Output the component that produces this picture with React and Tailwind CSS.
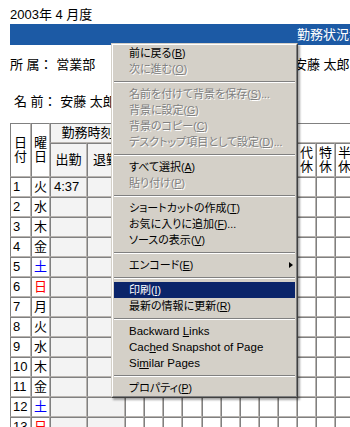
import React from "react";

const days = ["火", "水", "木", "金", "土", "日", "月", "火", "水", "木", "金", "土", "日"];
// columns under the menu carry no visible label in the picture
const subLabels = ["", "", "", "", "", "", "", "", "", "代休", "特休", "半休"];

const cell =
  "border border-t-[#808080] border-l-[#808080] border-r-[#b8b4b0] border-b-[#b8b4b0] p-0 font-normal";

const menu = [
  { t: "前に戻る", k: "B" },
  { t: "次に進む", k: "O", off: true },
  "sep",
  { t: "名前を付けて背景を保存", k: "S", dots: true, off: true },
  { t: "背景に設定", k: "G", off: true },
  { t: "背景のコピー", k: "C", off: true },
  { t: "デスクトップ項目として設定", k: "D", dots: true, off: true },
  "sep",
  { t: "すべて選択", k: "A" },
  { t: "貼り付け", k: "P", off: true },
  "sep",
  { t: "ショートカットの作成", k: "T" },
  { t: "お気に入りに追加", k: "F", dots: true },
  { t: "ソースの表示", k: "V" },
  "sep",
  { t: "エンコード", k: "E", sub: true },
  "sep",
  { t: "印刷", k: "I", active: true },
  { t: "最新の情報に更新", k: "R" },
  "sep",
  { en: ["Backward ", "L", "inks"] },
  { en: ["Cac", "h", "ed Snapshot of Page"] },
  { en: ["Si", "m", "ilar Pages"] },
  "sep",
  { t: "プロパティ", k: "P" },
];

function MenuItem({ item }) {
  if (item === "sep") {
    return (
      <div className="h-[9px] flex flex-col justify-center">
        <div className="h-px bg-[#808080]" />
        <div className="h-px bg-white" />
      </div>
    );
  }
  const tone = item.active
    ? "bg-[#0a246a] text-white"
    : item.off
    ? "text-[#808080] [text-shadow:1px_1px_0_#ffffff]"
    : "text-black";
  return (
    <div className={`relative h-[16px] leading-[16px] pl-[15px] whitespace-nowrap ${tone}`}>
      {item.en ? (
        <span className="text-[11.5px]">
          {item.en[0]}
          <u>{item.en[1]}</u>
          {item.en[2]}
        </span>
      ) : (
        <>
          {item.t}
          <span className="text-[10.5px]">
            (<u>{item.k}</u>){item.dots ? "..." : ""}
          </span>
        </>
      )}
      {item.sub && (
        <span className="absolute right-[2px] top-[5px] w-0 h-0 border-y-[3.5px] border-y-transparent border-l-[4px] border-l-black" />
      )}
    </div>
  );
}

export default function App() {
  return (
    <div className="relative w-[350px] h-[427px] overflow-hidden bg-white text-black font-['Liberation_Sans','Noto_Sans_CJK_JP',sans-serif]">
      <div className="ml-[10px] pt-[7px] text-[13px] leading-[15px]">2003年 4 月度</div>

      <div className="mt-[2px] ml-[10px] h-[21px] bg-[#1c5aa5] pl-[287px] flex items-center whitespace-nowrap overflow-hidden text-white text-[13px]">
        勤務状況報告書
      </div>

      <div className="mt-[12px] ml-[10px] flex text-[13px] leading-[15px] whitespace-nowrap">
        <div className="w-[284px]">所 属：&nbsp;営業部</div>
        <div>安藤 太郎</div>
      </div>

      <div className="mt-[22px] ml-[14px] text-[13px] leading-[15px] whitespace-nowrap">名 前：&nbsp;安藤 太郎</div>

      <table className="mt-[14px] ml-[10px] w-[344px] table-fixed border-separate border-spacing-0 text-[13px] leading-[14px]">
        <colgroup>
          <col className="w-[21px]" />
          <col className="w-[19px]" />
          <col className="w-[37px]" />
          <col className="w-[38px]" />
          {subLabels.map((l, i) => (
            <col key={i} className={i === 3 ? "w-[20px]" : "w-[19px]"} />
          ))}
        </colgroup>
        <thead>
          <tr className="h-[20px]">
            <th rowSpan={2} className={`${cell} bg-white`}>
              日<br />付
            </th>
            <th rowSpan={2} className={`${cell} bg-white`}>
              曜<br />日
            </th>
            <th colSpan={2} className={`${cell} bg-[#f3f3f3]`}>
              勤務時刻
            </th>
            <th colSpan={12} className={`${cell} bg-white`} />
          </tr>
          <tr className="h-[34px]">
            <th className={`${cell} bg-[#f3f3f3]`}>出勤</th>
            <th className={`${cell} bg-[#f3f3f3]`}>退勤</th>
            {subLabels.map((l, i) => (
              <th key={i} className={`${cell} bg-white`}>
                {l[0]}
                <br />
                {l[1]}
              </th>
            ))}
          </tr>
        </thead>
        <tbody>
          {days.map((d, i) => (
            <tr key={i} className="h-[20px]">
              <td className={`${cell} pl-[2px]`}>{i + 1}</td>
              <td
                className={`${cell} pl-[2px] ${
                  d === "土" ? "text-[#0000ff]" : d === "日" ? "text-[#ff0000]" : ""
                }`}
              >
                {d}
              </td>
              <td className={`${cell} pl-[3px] bg-[#f3f3f3]`}>{i === 0 ? "4:37" : ""}</td>
              <td className={`${cell} bg-[#f3f3f3]`} />
              {subLabels.map((l, j) => (
                <td key={j} className={cell} />
              ))}
            </tr>
          ))}
        </tbody>
      </table>

      <div className="absolute left-[111px] top-[43px] w-[187px] bg-[#d4d0c8] border border-t-[#d4d0c8] border-l-[#d4d0c8] border-r-[#404040] border-b-[#404040] shadow-[2px_2px_2px_rgba(0,0,0,0.35)] text-[11px] [font-feature-settings:'palt']">
        <div className="border border-t-white border-l-white border-r-[#808080] border-b-[#808080] px-[1px]">
          {menu.map((item, i) => (
            <MenuItem key={i} item={item} />
          ))}
        </div>
      </div>
    </div>
  );
}
